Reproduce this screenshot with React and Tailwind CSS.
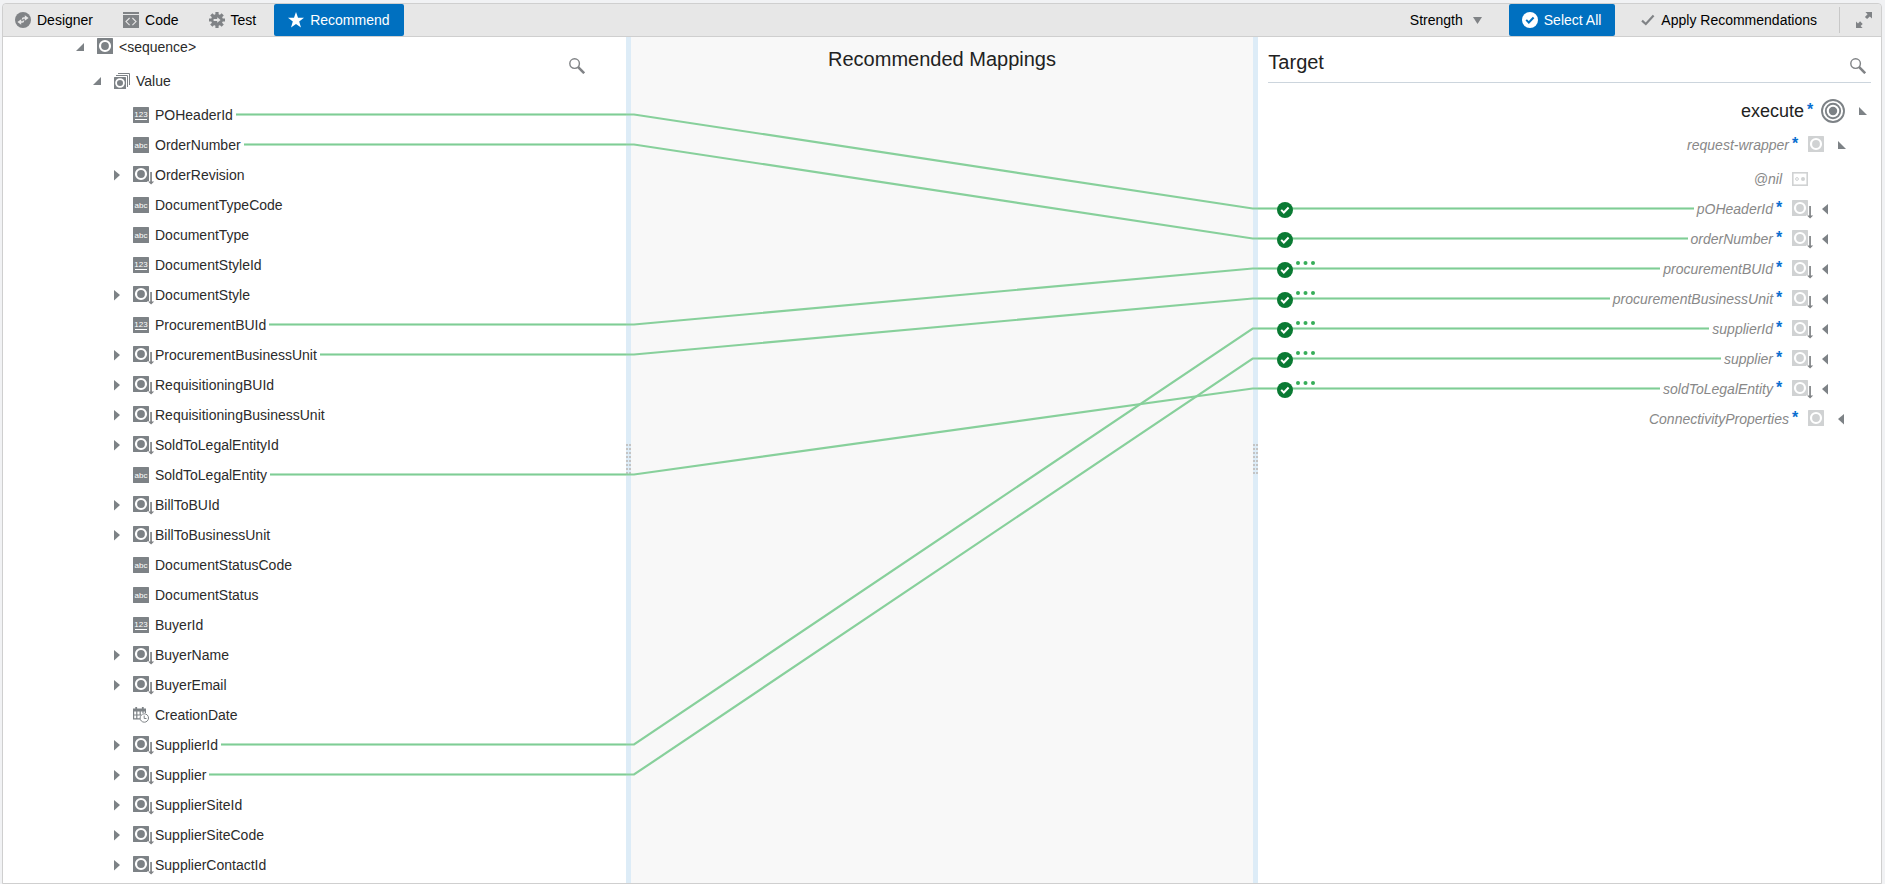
import React from "react";

const SOURCE_FIELDS = [
  { name: "POHeaderId", type: "number", to: 0 },
  { name: "OrderNumber", type: "string", to: 1 },
  { name: "OrderRevision", type: "element" },
  { name: "DocumentTypeCode", type: "string" },
  { name: "DocumentType", type: "string" },
  { name: "DocumentStyleId", type: "number" },
  { name: "DocumentStyle", type: "element" },
  { name: "ProcurementBUId", type: "number", to: 2 },
  { name: "ProcurementBusinessUnit", type: "element", to: 3 },
  { name: "RequisitioningBUId", type: "element" },
  { name: "RequisitioningBusinessUnit", type: "element" },
  { name: "SoldToLegalEntityId", type: "element" },
  { name: "SoldToLegalEntity", type: "string", to: 6 },
  { name: "BillToBUId", type: "element" },
  { name: "BillToBusinessUnit", type: "element" },
  { name: "DocumentStatusCode", type: "string" },
  { name: "DocumentStatus", type: "string" },
  { name: "BuyerId", type: "number" },
  { name: "BuyerName", type: "element" },
  { name: "BuyerEmail", type: "element" },
  { name: "CreationDate", type: "date" },
  { name: "SupplierId", type: "element", to: 4 },
  { name: "Supplier", type: "element", to: 5 },
  { name: "SupplierSiteId", type: "element" },
  { name: "SupplierSiteCode", type: "element" },
  { name: "SupplierContactId", type: "element" },
];

const TARGET_FIELDS = [
  { name: "pOHeaderId" },
  { name: "orderNumber" },
  { name: "procurementBUId", more: true },
  { name: "procurementBusinessUnit", more: true },
  { name: "supplierId", more: true },
  { name: "supplier", more: true },
  { name: "soldToLegalEntity", more: true },
];

function DesignerIcon() {
  return (
    <svg className="size-4 shrink-0" viewBox="0 0 16 16" aria-hidden="true">
      <circle cx="8" cy="8" r="8" fill="#808386" />
      <path d="M9.800 3.200 13.600 6 9.800 8.800zM6.200 7.200v5.600L2.400 10z" fill="#e7e7e7" />
      <path d="M10 6H8.600Q7.500 6 7.500 7.600M6 10h1.400Q8.500 10 8.500 8.400" fill="none" stroke="#e7e7e7" strokeWidth="1.500" />
    </svg>
  );
}

function CodeIcon() {
  return (
    <svg className="size-4 shrink-0" viewBox="0 0 16 16" aria-hidden="true">
      <path d="M0 0h16v2H0zM0 3h16v13H0z" fill="#808386" />
      <path d="M6.6 6 3 9.6l3.6 3.6M9.4 6 13 9.6l-3.6 3.6" fill="none" stroke="#e7e7e7" strokeWidth="1.1" />
    </svg>
  );
}

function TestIcon() {
  return (
    <svg className="size-4 shrink-0" viewBox="0 0 16 16" aria-hidden="true">
      <circle cx="8" cy="8" r="5.9" fill="#808386" />
      <g stroke="#808386" strokeWidth="3.2">
        <path d="M8 0v16M0 8h16M2.3 2.3l11.4 11.4M13.7 2.3 2.3 13.7" />
      </g>
      <path d="M4.6 7h3.6V5.2L11.6 8l-3.4 2.8V9H4.6z" fill="#e7e7e7" />
    </svg>
  );
}

function StarIcon() {
  return (
    <svg className="size-4 shrink-0" viewBox="0 0 16 16" aria-hidden="true">
      <path d="M8 0l2 5.7 6 .1-4.8 3.7 1.8 6L8 12l-5 3.5 1.8-6L0 5.8l6-.1z" fill="#fff" />
    </svg>
  );
}

function CheckCircle({ disc, mark }) {
  return (
    <svg className="size-4 shrink-0" viewBox="0 0 16 16" aria-hidden="true">
      <circle cx="8" cy="8" r="8" fill={disc} />
      <path d="M4.2 7.9l2.6 2.6 4.8-5" fill="none" stroke={mark} strokeWidth="2" />
    </svg>
  );
}

function CheckIcon() {
  return (
    <svg className="h-3 w-3.5 shrink-0" viewBox="0 0 14 12" aria-hidden="true">
      <path d="M1 6.6 4.8 10 12.6 1.6" fill="none" stroke="#808386" strokeWidth="2.2" />
    </svg>
  );
}

function ExpandIcon() {
  return (
    <svg className="size-4" viewBox="0 0 16 16" fill="#808386" aria-hidden="true">
      <path d="M9.4 0H16v6.6l-2.2-2.2-2.7 2.7-2.2-2.2 2.7-2.7zM0 9.4l2 2 2.1-2.1 2.6 2.6L4.6 14l2 2H0z" />
    </svg>
  );
}

function SearchIcon() {
  return (
    <svg className="size-4" viewBox="0 0 16 16" fill="none" stroke="#808386" aria-hidden="true">
      <circle cx="5.6" cy="5.6" r="4.8" strokeWidth="1.4" />
      <path d="M9.2 9.2l6 6" strokeWidth="2.6" />
    </svg>
  );
}

function ElementIcon({ color, arrow }) {
  return (
    <svg className="h-5 w-4 shrink-0 overflow-visible" viewBox="0 0 16 20" aria-hidden="true">
      <rect y="1" width="16" height="16" rx=".6" fill={color} />
      <circle cx="8" cy="9" r="5" fill="none" stroke="#fff" strokeWidth="2.200" />
      {arrow && <path d="M16 6.5h4V16h3l-5 4.6L14 16h2z" fill="#fff" />}
      {arrow && <path d="M17.2 7h1.7v9.6h2.3l-3.1 3-3.1-3h2.2z" fill="#808386" />}
    </svg>
  );
}

function NumberIcon() {
  return (
    <svg className="size-4 shrink-0" viewBox="0 0 16 16" aria-hidden="true">
      <rect width="16" height="16" rx=".6" fill="#7d8286" />
      <text x="8" y="10" fontSize="8" textAnchor="middle" fill="#fff" fontFamily="Liberation Sans, sans-serif">
        123
      </text>
      <path d="M2 12.5h12" stroke="#fff" />
    </svg>
  );
}

function StringIcon() {
  return (
    <svg className="size-4 shrink-0" viewBox="0 0 16 16" aria-hidden="true">
      <rect width="16" height="16" rx=".6" fill="#7d8286" />
      <text x="8" y="11" fontSize="8" textAnchor="middle" fill="#fff" fontFamily="Liberation Sans, sans-serif">
        abc
      </text>
    </svg>
  );
}

function DateIcon() {
  return (
    <svg className="size-4 shrink-0" viewBox="0 0 16 16" fill="none" stroke="#7d8286" aria-hidden="true">
      <path d="M0 3h13" strokeWidth="3" />
      <path d="M3.2 0v3M9.8 0v3" strokeWidth="1.8" />
      <path d="M.6 3v8.9H7M12.4 4v2M.6 8H8M3.8 4v8M7.2 4v4M10 4v2" strokeWidth="1.2" />
      <circle cx="11.3" cy="11" r="4.2" strokeWidth="1" fill="#fff" />
      <path d="M11.2 8.6v2.9h2.3" strokeWidth="1" />
    </svg>
  );
}

function RepeatingIcon() {
  return (
    <svg className="size-4 shrink-0" viewBox="0 0 16 16" aria-hidden="true">
      <path d="M4 .5h11.5V12M2 2.5h11.5V14" fill="none" stroke="#7d8286" />
      <rect y="4" width="12" height="12" rx=".6" fill="#7d8286" />
      <circle cx="6" cy="10" r="3.9" fill="none" stroke="#fff" strokeWidth="1.8" />
    </svg>
  );
}

function TargetIcon() {
  return (
    <svg className="size-6 shrink-0" viewBox="0 0 24 24" fill="none" stroke="#7d8286" strokeWidth="1.9" aria-hidden="true">
      <circle cx="12" cy="12" r="11" />
      <circle cx="12" cy="12" r="7.2" />
      <circle cx="12" cy="12" r="4.2" fill="#7d8286" stroke="none" />
    </svg>
  );
}

function AttributeIcon() {
  return (
    <svg className="size-4 shrink-0" viewBox="0 0 16 16" fill="none" stroke="#d0d2d3" aria-hidden="true">
      <rect x=".8" y="1.8" width="14.4" height="12.4" strokeWidth="1.6" />
      <circle cx="5" cy="8" r="1.4" strokeWidth="1" />
      <circle cx="11" cy="8" r="2" fill="#d0d2d3" stroke="none" />
    </svg>
  );
}

const TRIANGLES = {
  expanded: "M8 0v8H0z",
  expandedRight: "M0 0v8h8z",
  collapsed: "M0 -1l6 5-6 5.500z",
  collapsedRight: "M6 -1L0 4l6 5.500z",
};

function Toggle({ kind, label }) {
  return (
    <button type="button" aria-label={label} className="size-2 shrink-0">
      <svg className="size-2 overflow-visible" viewBox="0 0 8 8" fill="#7d8286" aria-hidden="true">
        <path d={TRIANGLES[kind]} />
      </svg>
    </button>
  );
}

function FieldIcon({ type }) {
  if (type === "number") return <NumberIcon />;
  if (type === "string") return <StringIcon />;
  if (type === "date") return <DateIcon />;
  return <ElementIcon color="#7d8286" arrow />;
}

function Line({ className }) {
  return <div className={`mb-px h-[3px] border-y border-[#b9e4c5] bg-[#7fcd95] ${className}`} />;
}

function Splitter() {
  return (
    <div className="flex w-[5px] shrink-0 flex-col items-center justify-center bg-[#ddecf7]">
      <svg className="h-8 w-[5px]" viewBox="0 0 5 32" fill="#c4c4c4" aria-hidden="true">
        {[0, 4, 8, 12, 16, 20, 24, 28].map((y) => (
          <path key={y} d={`M0 ${y}h2v2H0zM3 ${y}h2v2H3z`} />
        ))}
      </svg>
    </div>
  );
}

function Toolbar() {
  return (
    <header className="flex h-[33px] items-stretch rounded-t border-b border-[#cfcfcf] bg-[#e7e7e7] text-black">
      <nav className="flex items-stretch">
        <button type="button" className="flex items-center gap-1.5 pr-3 pl-3">
          <DesignerIcon />
          Designer
        </button>
        <button type="button" className="flex items-center gap-1.5 pr-3 pl-[18px]">
          <CodeIcon />
          Code
        </button>
        <button type="button" className="flex items-center gap-1.5 pr-[18px] pl-[18px]">
          <TestIcon />
          Test
        </button>
        <button type="button" className="flex items-center gap-1.5 rounded-xs bg-[#0070c0] pr-3.5 pl-3.5 text-white">
          <StarIcon />
          Recommend
        </button>
      </nav>
      <div className="ml-auto flex items-stretch">
        <button type="button" className="flex items-center gap-2.5 pr-[27px]">
          Strength
          <svg className="h-[7px] w-[9px]" viewBox="0 0 9 7" fill="#808386" aria-hidden="true">
            <path d="M0 0h9L4.500 7z" />
          </svg>
        </button>
        <button type="button" className="flex items-center gap-1.5 rounded-xs bg-[#0070c0] pr-3.5 pl-[13px] text-white">
          <CheckCircle disc="#fff" mark="#0070c0" />
          Select All
        </button>
        <button type="button" className="flex items-center gap-1.5 pr-[22px] pl-[26px]">
          <CheckIcon />
          Apply Recommendations
        </button>
        <div className="my-[3px] w-px bg-[#c8c8c8]" />
        <button type="button" aria-label="Maximize" className="flex items-center pr-[9px] pl-4">
          <ExpandIcon />
        </button>
      </div>
    </header>
  );
}

function SourcePanel() {
  return (
    <section aria-label="Source" className="relative min-w-0 flex-1 basis-0 bg-white pb-[3px]">
      <button type="button" aria-label="Search source" className="absolute top-[21px] right-[41px]">
        <SearchIcon />
      </button>
      <div className="flex h-[27px] items-center pb-[7px] pl-[73px]">
        <Toggle kind="expanded" label="Collapse sequence" />
        <span className="flex items-center gap-1.5 pl-[13px]">
          <ElementIcon color="#7d8286" />
          &lt;sequence&gt;
        </span>
      </div>
      <div className="mb-0.5 flex h-[34px] items-center pl-[90px]">
        <Toggle kind="expanded" label="Collapse Value" />
        <span className="flex items-center gap-1.5 pl-[13px]">
          <RepeatingIcon />
          Value
        </span>
      </div>
      <ul>
        {SOURCE_FIELDS.map((field) => (
          <li key={field.name} className="flex h-[30px] items-center pl-[111px]">
            <span className="flex w-[19px]">
              {field.type === "element" && <Toggle kind="collapsed" label={`Expand ${field.name}`} />}
            </span>
            <span className="flex items-center gap-1.5">
              <FieldIcon type={field.type} />
              {field.name}
            </span>
            {field.to !== undefined && <Line className="ml-[3px] flex-1" />}
          </li>
        ))}
      </ul>
    </section>
  );
}

function MappingPanel() {
  return (
    <section className="relative min-w-0 flex-1 basis-0 bg-[#f8f8f8]">
      <h2 className="pt-2.5 text-center text-xl leading-6 text-[#222]">Recommended Mappings</h2>
      <svg
        className="absolute top-0 -left-[5px] h-[846px] w-[calc(100%+10px)]"
        viewBox="0 0 631 846"
        preserveAspectRatio="none"
        fill="none"
        stroke="#87d09b"
        strokeWidth="2.200"
        aria-hidden="true"
      >
        {SOURCE_FIELDS.map((field, i) =>
          field.to === undefined ? null : (
            <polyline
              key={field.name}
              vectorEffect="non-scaling-stroke"
              points={`0,${77.5 + i * 30} 8,${77.5 + i * 30} 625,${171.5 + field.to * 30} 631,${171.5 + field.to * 30}`}
            />
          ),
        )}
      </svg>
    </section>
  );
}

function Required() {
  return <span className="ml-[3px] w-[7px] pb-0.5 text-base leading-4 font-bold text-[#0a6fd0] not-italic">*</span>;
}

function TargetPanel() {
  return (
    <section className="min-w-0 flex-1 basis-0 bg-white">
      <div className="mr-2.5 ml-2.5 flex h-[46px] items-end justify-between border-b border-[#ccd5dd] pr-[5px] pb-2">
        <h2 className="text-xl leading-6 text-[#222]">Target</h2>
        <button type="button" aria-label="Search target">
          <SearchIcon />
        </button>
      </div>
      <div className="mt-[11px] flex h-[34px] items-center justify-end pr-3.5 text-lg text-[#222]">
        execute
        <Required />
        <span className="ml-[7px] flex">
          <TargetIcon />
        </span>
        <span className="ml-3.5 flex">
          <Toggle kind="expandedRight" label="Collapse execute" />
        </span>
      </div>
      <div className="flex h-[34px] items-center justify-end pr-[35px] text-[#888] italic">
        request-wrapper
        <Required />
        <span className="ml-[9px] flex">
          <ElementIcon color="#d0d2d3" />
        </span>
        <span className="ml-3.5 flex">
          <Toggle kind="expandedRight" label="Collapse request-wrapper" />
        </span>
      </div>
      <div className="flex h-8 items-center justify-end gap-2.5 pt-0.5 pr-[73px] text-[#888] italic">
        @nil
        <AttributeIcon />
      </div>
      <ul className="text-[#888] italic">
        {TARGET_FIELDS.map((field) => (
          <li key={field.name} className="relative flex h-[30px] items-center justify-end pr-[51px]">
            <Line className="mr-[3px] flex-1" />
            {field.name}
            <Required />
            <span className="ml-[9px] flex">
              <ElementIcon color="#d0d2d3" arrow />
            </span>
            <span className="ml-3.5 flex">
              <Toggle kind="collapsedRight" label={`Expand ${field.name}`} />
            </span>
            <button type="button" aria-label={`Accept ${field.name}`} className="absolute top-2 left-[19px]">
              <CheckCircle disc="#0a7a33" mark="#fff" />
            </button>
            {field.more && (
              <button type="button" aria-label={`More matches for ${field.name}`} className="absolute top-[7px] left-[38px] flex">
                <svg className="h-1 w-5" viewBox="0 0 20 4" fill="#36ad58" aria-hidden="true">
                  <circle cx="2" cy="2" r="2" />
                  <circle cx="9.500" cy="2" r="2" />
                  <circle cx="17" cy="2" r="2" />
                </svg>
              </button>
            )}
          </li>
        ))}
      </ul>
      <div className="flex h-[30px] items-center justify-end pr-[35px] text-[#888] italic">
        ConnectivityProperties
        <Required />
        <span className="ml-[9px] flex">
          <ElementIcon color="#d0d2d3" />
        </span>
        <span className="ml-3.5 flex">
          <Toggle kind="collapsedRight" label="Expand ConnectivityProperties" />
        </span>
      </div>
    </section>
  );
}

export default function App() {
  return (
    <div className="flex min-h-screen flex-col bg-[#f1f2f4] pt-[3px] pr-[3px] pl-0.5 font-['Liberation_Sans',Arial,sans-serif] text-sm leading-5 text-[#2b2b2b]">
      <div className="flex flex-1 flex-col rounded-t border border-[#cfcfcf]">
        <Toolbar />
        <main className="flex flex-1">
          <SourcePanel />
          <Splitter />
          <MappingPanel />
          <Splitter />
          <TargetPanel />
        </main>
      </div>
    </div>
  );
}
